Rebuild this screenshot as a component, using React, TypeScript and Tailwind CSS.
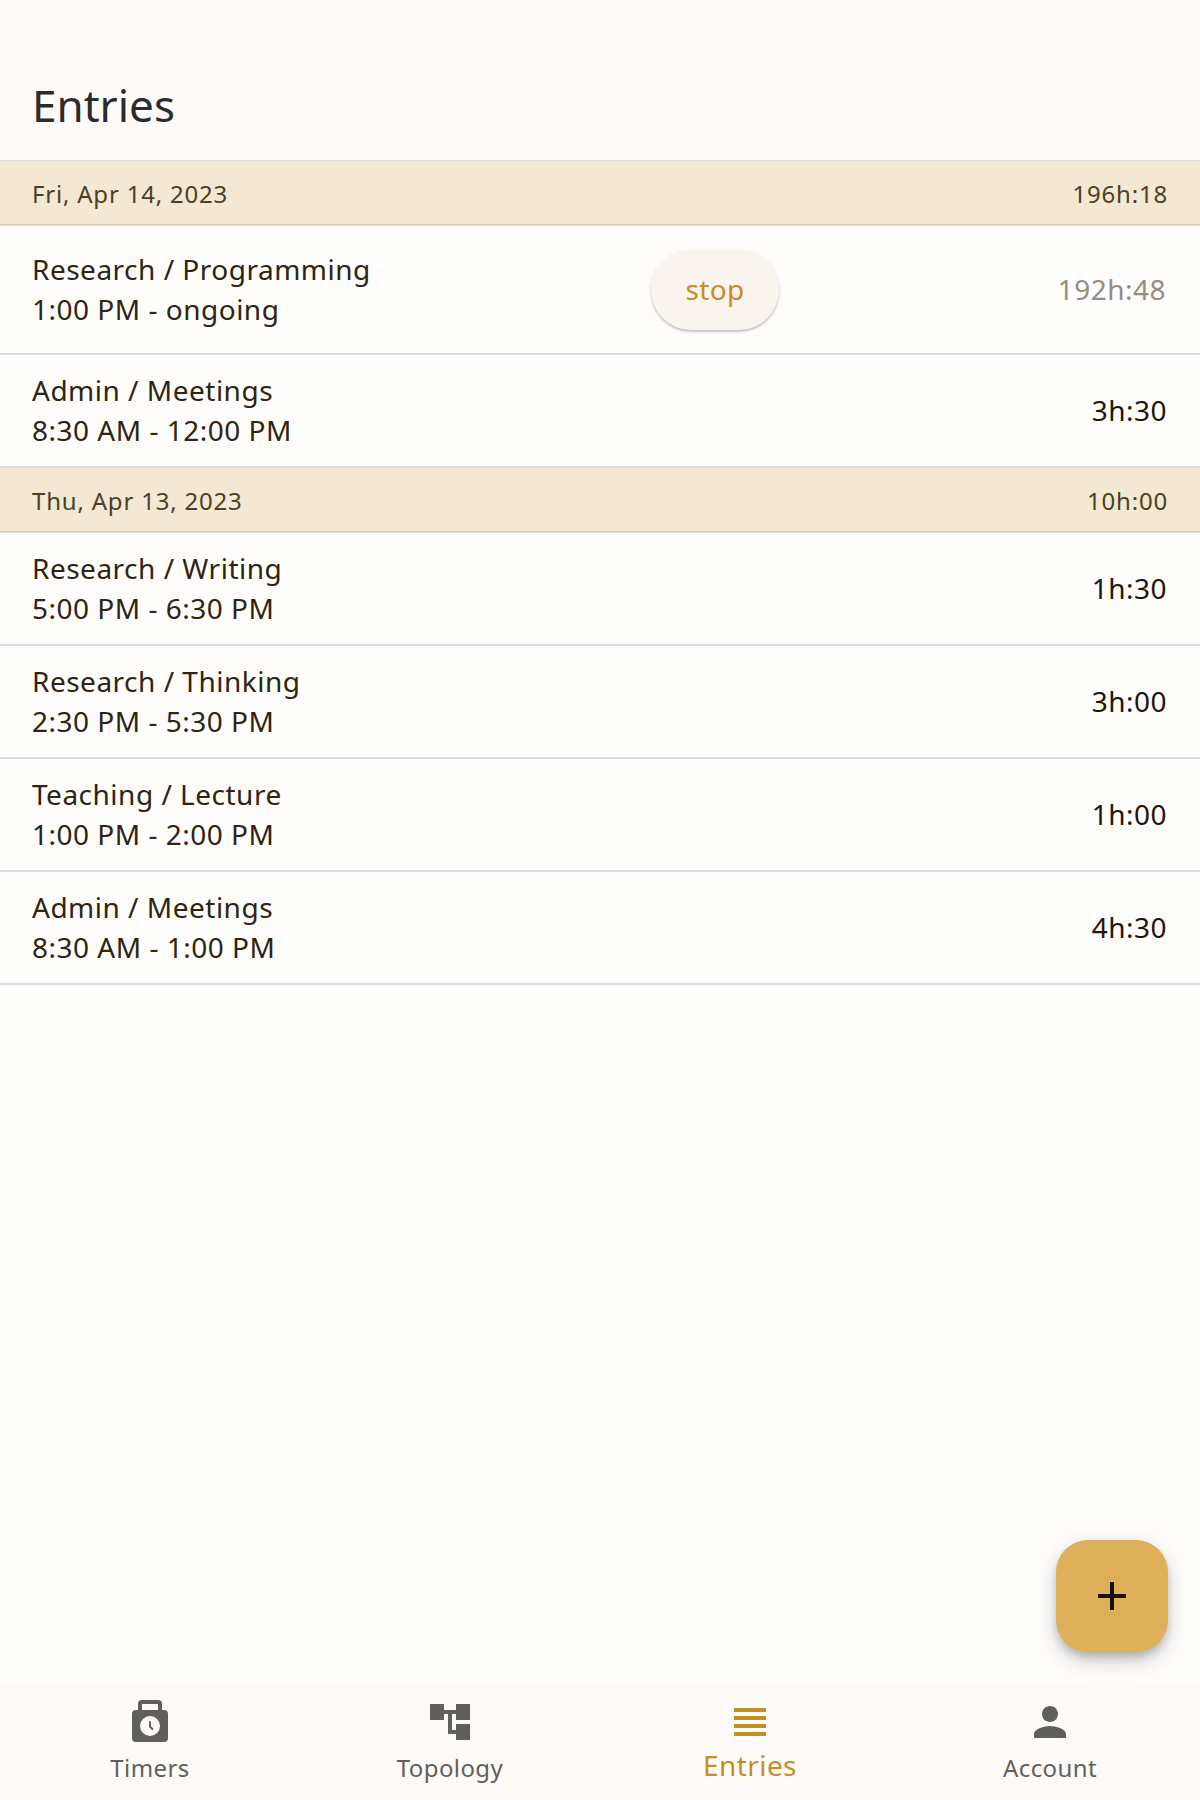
import type { ReactNode } from "react";

type Entry = { title: string; time: string; total: string; ongoing?: boolean };
type Day = { date: string; total: string; entries: Entry[] };

const days: Day[] = [
  {
    date: "Fri, Apr 14, 2023",
    total: "196h:18",
    entries: [
      { title: "Research / Programming", time: "1:00 PM - ongoing", total: "192h:48", ongoing: true },
      { title: "Admin / Meetings", time: "8:30 AM - 12:00 PM", total: "3h:30" },
    ],
  },
  {
    date: "Thu, Apr 13, 2023",
    total: "10h:00",
    entries: [
      { title: "Research / Writing", time: "5:00 PM - 6:30 PM", total: "1h:30" },
      { title: "Research / Thinking", time: "2:30 PM - 5:30 PM", total: "3h:00" },
      { title: "Teaching / Lecture", time: "1:00 PM - 2:00 PM", total: "1h:00" },
      { title: "Admin / Meetings", time: "8:30 AM - 1:00 PM", total: "4h:30" },
    ],
  },
];

function DayHeader({ day }: { day: Day }) {
  return (
    <div className="flex h-[65px] items-center justify-between border-b border-[#dddddd] bg-[#f3e8d2] px-8 pt-0.5 text-2xl tracking-[0.8px] text-[#4b3f26] shadow-[inset_0_-1px_0_#d8ccb6]">
      <span>{day.date}</span>
      <span>{day.total}</span>
    </div>
  );
}

function EntryRow({ entry }: { entry: Entry }) {
  return (
    <div
      className={`flex items-center border-b-2 border-[#dddddd] px-8 text-[28px] leading-10 tracking-[0.5px] text-[#2e2410] ${
        entry.ongoing ? "h-[129px]" : "h-[113px]"
      }`}
    >
      <div className="flex-1 pb-0.5">
        <div>{entry.title}</div>
        <div>{entry.time}</div>
      </div>
      {entry.ongoing && (
        <button className="h-20 w-32 rounded-full bg-[#faf4ee] pb-0.5 tracking-[0.3px] text-[#c68e20] shadow-[0_2px_2px_rgba(0,0,0,0.18),0_1px_4px_rgba(0,0,0,0.08)]">
          stop
        </button>
      )}
      <div
        className={
          entry.ongoing
            ? "w-[389px] pr-0.5 pb-0.5 text-right text-[#958e80]"
            : "pr-px pb-0.5 text-right text-[#1f1605]"
        }
      >
        {entry.total}
      </div>
    </div>
  );
}

function Glyph({ children }: { children: ReactNode }) {
  return (
    <svg viewBox="0 0 24 24" className="size-12 shrink-0" fill="currentColor">
      {children}
    </svg>
  );
}

const tabs = [
  {
    label: "Timers",
    icon: (
      <>
        <path d="M6 7V3a2 2 0 0 1 2-2h8a2 2 0 0 1 2 2v4h-2V3H8v4z" />
        <path
          fillRule="evenodd"
          d="M5 6h14a2 2 0 0 1 2 2v12a2 2 0 0 1-2 2H5a2 2 0 0 1-2-2V8a2 2 0 0 1 2-2zm7 3a5 5 0 1 0 0 10a5 5 0 1 0 0-10z"
        />
        <path d="M12 12v2.3l1.2 1.2" fill="none" stroke="currentColor" strokeWidth="1" strokeLinecap="round" />
      </>
    ),
  },
  { label: "Topology", icon: <path d="M22 11V3h-7v3H9V3H2v8h7V8h2v10h4v3h7v-8h-7v3h-2V8h2v3z" /> },
  { label: "Entries", icon: <path d="M4 15h16v-2H4zm0 4h16v-2H4zm0-8h16V9H4zm0-6v2h16V5z" />, active: true },
  {
    label: "Account",
    icon: (
      <path d="M12 12c2.21 0 4-1.79 4-4s-1.79-4-4-4-4 1.79-4 4 1.79 4 4 4m0 2c-2.67 0-8 1.34-8 4v2h16v-2c0-2.66-5.33-4-8-4" />
    ),
  },
];

export default function App() {
  return (
    <div className="relative flex h-[1800px] w-[1200px] flex-col bg-[#fefdfc] font-['Noto_Sans',sans-serif]">
      <header className="h-[161px] border-b border-[#dddddd] bg-[#fefaf8] px-8 pt-[75px]">
        <h1 className="text-[44px] leading-[60px] text-[#2b2b2b]">Entries</h1>
      </header>
      <main className="flex-1">
        {days.map((day) => (
          <section key={day.date}>
            <DayHeader day={day} />
            {day.entries.map((entry) => (
              <EntryRow key={entry.title} entry={entry} />
            ))}
          </section>
        ))}
      </main>
      <button
        aria-label="Add entry"
        className="absolute right-8 bottom-[148px] flex size-28 items-center justify-center rounded-[32px] bg-[#deb05a] text-[#17130a] shadow-[0_6px_10px_-2px_rgba(0,0,0,0.2),0_12px_20px_rgba(0,0,0,0.12),0_2px_20px_rgba(0,0,0,0.08)]"
      >
        <Glyph>
          <path d="M19 13h-6v6h-2v-6H5v-2h6V5h2v6h6z" />
        </Glyph>
      </button>
      <nav className="grid h-[116px] grid-cols-4 bg-[#fefaf8]">
        {tabs.map((tab) => (
          <div
            key={tab.label}
            className={`flex flex-col items-center pt-3.5 ${tab.active ? "text-[#c68e20]" : "text-[#5f5f5d]"}`}
          >
            <Glyph>{tab.icon}</Glyph>
            <span className={tab.active ? "-mt-px text-[28px] leading-10 tracking-[0.4px]" : "mt-1 text-2xl leading-9 tracking-[0.4px]"}>
              {tab.label}
            </span>
          </div>
        ))}
      </nav>
    </div>
  );
}
